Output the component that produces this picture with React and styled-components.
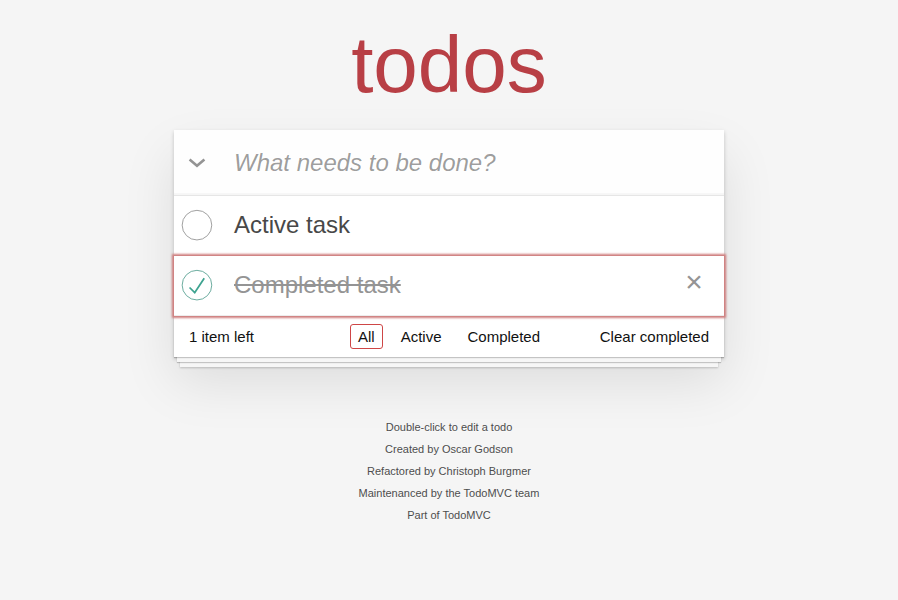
import React from "react";
import styled, { createGlobalStyle } from "styled-components";

const GlobalStyle = createGlobalStyle`
  html, body { margin: 0; padding: 0; }
  body {
    font: 14px "Liberation Sans", Arial, Helvetica, sans-serif;
    line-height: 19.6px;
    background: #f5f5f5;
    color: #111111;
    font-weight: 300;
  }
  * { box-sizing: border-box; }
`;

const Page = styled.div`
  max-width: 550px;
  margin: 0 auto;
  padding-top: 25px;
`;

const Title = styled.h1`
  margin: 0 0 25px;
  height: 80px;
  font-size: 80px;
  line-height: 80px;
  font-weight: 200;
  text-align: center;
  color: #b83f45;
`;

const App = styled.section`
  background: #fff;
  position: relative;
  box-shadow: 0 2px 4px 0 rgba(0, 0, 0, 0.2), 0 25px 50px 0 rgba(0, 0, 0, 0.1);
`;

const Header = styled.header`
  display: flex;
  height: 65px;
  background: rgba(0, 0, 0, 0.003);
  box-shadow: inset 0 -2px 1px rgba(0, 0, 0, 0.03);
`;

const ToggleAll = styled.div`
  flex: none;
  width: 45px;
  display: flex;
  align-items: center;
  justify-content: center;
`;

const NewTodo = styled.input`
  flex: 1;
  min-width: 0;
  height: 65px;
  margin: 0;
  padding: 16px 16px 16px 15px;
  border: none;
  outline: none;
  font-family: inherit;
  font-size: 24px;
  font-weight: 400;
  line-height: 1.4em;
  color: #111;
  background: transparent;
  &::placeholder {
    font-style: italic;
    font-weight: 400;
    color: rgba(0, 0, 0, 0.4);
  }
`;

const Main = styled.section`
  position: relative;
  z-index: 2;
  border-top: 1px solid #e6e6e6;
`;

const List = styled.ul`
  margin: 0;
  padding: 0;
  list-style: none;
`;

const Item = styled.li`
  display: flex;
  align-items: center;
  font-size: 24px;
  border-bottom: 1px solid #ededed;
  box-shadow: ${(p) => (p.$focused ? "0 0 2px 2px #CF7D7D" : "none")};
`;

const Toggle = styled.svg`
  flex: none;
  width: 40px;
  height: 40px;
  margin-right: 20px;
`;

const Label = styled.label`
  flex: 1;
  display: block;
  padding: 15px 15px 15px 0;
  line-height: 1.2;
  font-weight: 400;
  word-break: break-all;
  color: ${(p) => (p.$done ? "#949494" : "#484848")};
  text-decoration: ${(p) => (p.$done ? "line-through" : "none")};
`;

const Destroy = styled.button`
  flex: none;
  width: 40px;
  height: 40px;
  margin: 0 10px 0 0;
  padding: 0;
  border: 0;
  background: none;
  font-family: inherit;
  font-size: 30px;
  line-height: 1.1;
  color: #949494;
  &::after {
    content: "×";
    display: block;
    height: 100%;
  }
`;

const Footer = styled.footer`
  position: relative;
  display: grid;
  grid-template-columns: 1fr auto 1fr;
  grid-template-rows: 20px;
  align-items: center;
  padding: 10px 15px;
  height: 41px;
  font-size: 15px;
  border-top: 1px solid #e6e6e6;
  &::before {
    content: "";
    position: absolute;
    right: 0;
    bottom: 0;
    left: 0;
    height: 50px;
    overflow: hidden;
    box-shadow: 0 1px 1px rgba(0, 0, 0, 0.2), 0 8px 0 -3px #f6f6f6,
      0 9px 1px -3px rgba(0, 0, 0, 0.2), 0 16px 0 -6px #f6f6f6,
      0 17px 2px -6px rgba(0, 0, 0, 0.2);
    pointer-events: none;
  }
`;

const Count = styled.span`
  text-align: left;
  position: relative;
`;

const Filters = styled.ul`
  display: flex;
  gap: 4px;
  margin: 0;
  padding: 0;
  list-style: none;
  position: relative;
`;

const FilterLink = styled.a`
  display: block;
  margin: 0 3px;
  padding: 3px 7px;
  line-height: 17px;
  color: inherit;
  text-decoration: none;
  border: 1px solid ${(p) => (p.$selected ? "#CE4646" : "transparent")};
  border-radius: 3px;
`;

const Clear = styled.button`
  justify-self: end;
  position: relative;
  margin: 0;
  padding: 0;
  border: 0;
  background: none;
  font: inherit;
  font-weight: 300;
  line-height: 19px;
  color: inherit;
`;

const Info = styled.footer`
  margin: 65px auto 0;
  color: #4d4d4d;
  font-size: 11px;
  text-shadow: 0 1px 0 rgba(255, 255, 255, 0.5);
  text-align: center;
`;

const InfoLine = styled.p`
  margin: 11px 0;
  line-height: 1;
`;

function Chevron() {
  return (
    <svg width="18" height="10" viewBox="0 0 18 10">
      <polyline
        points="1.6,1.6 9,7.8 16.4,1.6"
        fill="none"
        stroke="#949494"
        strokeWidth="2.6"
      />
    </svg>
  );
}

function ToggleIcon({ done }) {
  return (
    <Toggle viewBox="-10 -18 100 135">
      <circle
        cx="50"
        cy="50"
        r="50"
        fill="none"
        stroke={done ? "#59A193" : "#949494"}
        strokeWidth="3"
      />
      {done && <path fill="#3EA390" d="M72 25L42 71 27 56l-4 4 20 20 34-52z" />}
    </Toggle>
  );
}

export default function TodoApp() {
  return (
    <>
      <GlobalStyle />
      <Page>
        <Title>todos</Title>
        <App>
          <Header>
            <ToggleAll>
              <Chevron />
            </ToggleAll>
            <NewTodo placeholder="What needs to be done?" />
          </Header>
          <Main>
            <List>
              <Item>
                <ToggleIcon />
                <Label>Active task</Label>
              </Item>
              <Item $focused>
                <ToggleIcon done />
                <Label $done>Completed task</Label>
                <Destroy aria-label="Delete" />
              </Item>
            </List>
          </Main>
          <Footer>
            <Count>1 item left</Count>
            <Filters>
              <li>
                <FilterLink href="#/" $selected>All</FilterLink>
              </li>
              <li>
                <FilterLink href="#/active">Active</FilterLink>
              </li>
              <li>
                <FilterLink href="#/completed">Completed</FilterLink>
              </li>
            </Filters>
            <Clear>Clear completed</Clear>
          </Footer>
        </App>
        <Info>
          <InfoLine>Double-click to edit a todo</InfoLine>
          <InfoLine>Created by Oscar Godson</InfoLine>
          <InfoLine>Refactored by Christoph Burgmer</InfoLine>
          <InfoLine>Maintenanced by the TodoMVC team</InfoLine>
          <InfoLine>Part of TodoMVC</InfoLine>
        </Info>
      </Page>
    </>
  );
}
